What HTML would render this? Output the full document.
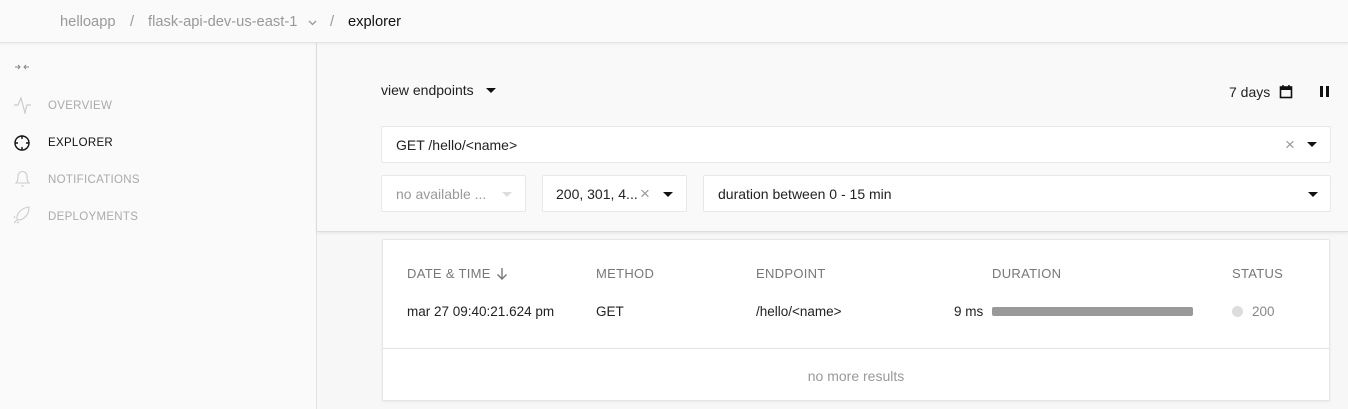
<!DOCTYPE html>
<html><head><style>
*{box-sizing:border-box;margin:0;padding:0}
body{width:1348px;height:409px;overflow:hidden;background:#f7f7f7;font-family:"Liberation Sans",sans-serif;color:#222;position:relative}
.hdr{position:absolute;left:0;top:0;width:1348px;height:43px;background:#fafafa;border-bottom:1px solid #e4e4e4;box-shadow:0 1px 3px rgba(0,0,0,.06);font-size:14.7px;z-index:2}
.hdr span{position:absolute;top:14px}
.side{position:absolute;left:0;top:43px;width:317px;height:366px;background:#fafafa;border-right:1px solid #e2e2e2}
.nav{position:absolute;left:48px;font-size:11.5px;letter-spacing:.3px;color:#aaa}
.panel{position:absolute;left:317px;top:43px;width:1031px;height:189px;background:#f9f9f9;border-bottom:1px solid #ddd;box-shadow:0 1px 3px rgba(0,0,0,.08)}
.box{position:absolute;background:#fff;border:1px solid #e8e8e8;border-radius:2px;font-size:14px}
.tri{position:absolute;width:0;height:0;border-left:5px solid transparent;border-right:5px solid transparent;border-top:5px solid #111}
.card{position:absolute;left:382px;top:239px;width:948px;height:162px;background:#fff;border:1px solid #e6e6e6;border-radius:2px;box-shadow:0 1px 2px rgba(0,0,0,.06)}
.th{position:absolute;top:26px;font-size:13px;color:#777;letter-spacing:.3px}
.td{position:absolute;top:64px;font-size:13.5px;color:#222}
</style></head><body>
<div class="hdr">
<span style="left:60px;color:#999">helloapp</span>
<span style="left:130px;color:#999">/</span>
<span style="left:148px;color:#999">flask-api-dev-us-east-1</span>
<svg style="position:absolute;left:308px;top:20px" width="9" height="6"><path d="M1 1l3.5 3.5L8 1" stroke="#999" stroke-width="1.3" fill="none"/></svg>
<span style="left:330px;color:#999">/</span>
<span style="left:348px;color:#111">explorer</span>
</div>
<div class="side">
<svg style="position:absolute;left:14px;top:20px" width="16" height="8"><path d="M1 4h5M4 2l2 2-2 2M15 4h-5M12 2l-2 2 2 2" stroke="#888" stroke-width="1" fill="none"/></svg>
<svg style="position:absolute;left:14px;top:53px" width="17" height="18"><path d="M0 9h4l3-7 4 15 2-8h4" stroke="#ccc" stroke-width="1.2" fill="none"/></svg>
<div class="nav" style="top:57px">OVERVIEW</div>
<svg style="position:absolute;left:13px;top:91px" width="18" height="18"><circle cx="9" cy="9" r="7" stroke="#111" stroke-width="1.4" fill="none"/><path d="M9 2v3M9 13v3M2 9h3M13 9h3" stroke="#111" stroke-width="1.4"/></svg>
<div class="nav" style="top:94px;color:#111">EXPLORER</div>
<svg style="position:absolute;left:14px;top:126px" width="17" height="20"><path d="M2 14c2-2 2-4 2-7a4.5 4.5 0 0 1 9 0c0 3 0 5 2 7z M7 17h3" stroke="#ccc" stroke-width="1.1" fill="none"/></svg>
<div class="nav" style="top:131px">NOTIFICATIONS</div>
<svg style="position:absolute;left:13px;top:163px" width="18" height="18"><path d="M4 14C3 8 8 2 16 1c0 8-5 13-11 13zM4 14l-3 3M2 10l-1 2M6 16l-2 1" stroke="#ccc" stroke-width="1.1" fill="none"/></svg>
<div class="nav" style="top:168px">DEPLOYMENTS</div>
</div>
<div class="panel">
<div style="position:absolute;left:64px;top:39px;font-size:14px">view endpoints</div>
<div class="tri" style="left:169px;top:45px"></div>
<div style="position:absolute;left:912px;top:41px;font-size:14px">7 days</div>
<svg style="position:absolute;left:962px;top:41px" width="14" height="15"><rect x="1.5" y="3" width="11" height="10.5" stroke="#111" stroke-width="1.6" fill="none"/><rect x="1" y="3" width="12" height="3" fill="#111"/><path d="M4 1v3M10 1v3" stroke="#111" stroke-width="1.5"/></svg>
<div style="position:absolute;left:1003px;top:43px;width:3px;height:11px;background:#111"></div>
<div style="position:absolute;left:1009px;top:43px;width:3px;height:11px;background:#111"></div>
<div class="box" style="left:64px;top:83px;width:950px;height:37px"><span style="position:absolute;left:14px;top:10px">GET /hello/&lt;name&gt;</span>
<span style="position:absolute;left:903px;top:8px;color:#999;font-size:17px">×</span><div class="tri" style="left:925px;top:15px"></div></div>
<div class="box" style="left:64px;top:132px;width:145px;height:37px"><span style="position:absolute;left:14px;top:10px;color:#999">no available ...</span><div class="tri" style="left:120px;top:16px;border-top-color:#ddd"></div></div>
<div class="box" style="left:225px;top:132px;width:145px;height:37px"><span style="position:absolute;left:13px;top:10px">200, 301, 4...</span><span style="position:absolute;left:97px;top:8px;color:#999;font-size:17px">×</span><div class="tri" style="left:120px;top:16px"></div></div>
<div class="box" style="left:386px;top:132px;width:628px;height:37px"><span style="position:absolute;left:14px;top:10px">duration between 0 - 15 min</span><div class="tri" style="left:604px;top:16px"></div></div>
</div>
<div class="card">
<div class="th" style="left:24px">DATE &amp; TIME</div>
<svg style="position:absolute;left:113px;top:27px" width="12" height="14"><path d="M6 1v11M1.5 7.5 6 12l4.5-4.5" stroke="#777" stroke-width="1.4" fill="none"/></svg>
<div class="th" style="left:213px">METHOD</div>
<div class="th" style="left:373px">ENDPOINT</div>
<div class="th" style="left:609px">DURATION</div>
<div class="th" style="left:849px">STATUS</div>
<div class="td" style="left:24px">mar 27 09:40:21.624 pm</div>
<div class="td" style="left:213px">GET</div>
<div class="td" style="left:373px">/hello/&lt;name&gt;</div>
<div class="td" style="left:571px">9 ms</div>
<div style="position:absolute;left:609px;top:67px;width:201px;height:9px;background:#999;border-radius:2px"></div>
<div style="position:absolute;left:849px;top:66px;width:11px;height:11px;border-radius:50%;background:#ddd"></div>
<div class="td" style="left:869px;color:#888">200</div>
<div style="position:absolute;left:0;top:108px;width:946px;border-top:1px solid #e2e2e2"></div>
<div style="position:absolute;left:0;top:128px;width:946px;text-align:center;font-size:14px;color:#999">no more results</div>
</div>
</body></html>
